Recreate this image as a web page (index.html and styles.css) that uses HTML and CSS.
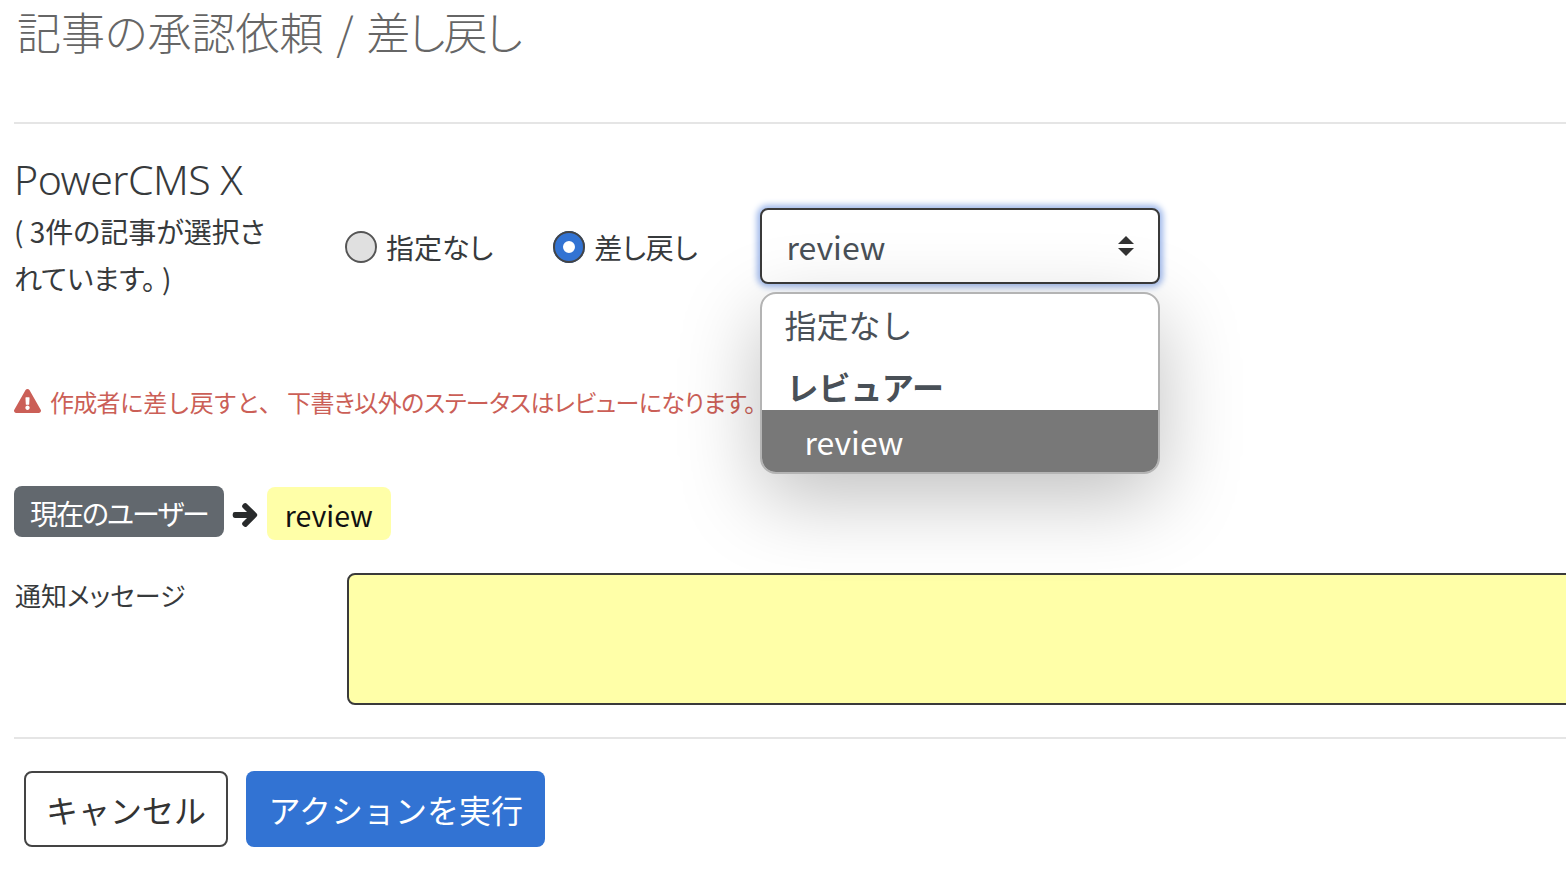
FILE: index.html
```html
<!DOCTYPE html>
<html lang="ja">

<head>
    <meta charset="UTF-8">
    <title>記事の承認依頼 / 差し戻し</title>
    <link rel="stylesheet" href="styles.css">
</head>

<body>
    <div class="modal">
        <h1 class="modal-title">記事の承認依頼 / <span class="title-tail">差し戻し</span></h1>
        <hr class="rule rule-top">

        <div class="form-row status-row">
            <div class="side-col">
                <h2 class="site-name">PowerCMS X</h2>
                <p class="selected-note">( 3件の記事が選択されています。 )</p>
            </div>
            <div class="radios">
                <label class="radio"><span class="radio-mark"></span>指定なし</label>
                <label class="radio"><span class="radio-mark is-checked"></span>差し戻し</label>
                <div class="select-wrap">
                    <div class="select-box">
                        <span>review</span>
                        <svg class="select-arrows" viewBox="0 0 16 20"><path d="M8 0l8 8H0zM8 20l-8-8h16z"/></svg>
                    </div>
                    <div class="select-list">
                        <div class="option">指定なし</div>
                        <div class="optgroup">レビュアー</div>
                        <div class="option is-selected">review</div>
                    </div>
                </div>
            </div>
        </div>

        <p class="warning">
            <svg class="warning-icon" viewBox="0 0 576 512"><path d="M569.517 440.013C587.975 472.007 564.806 512 527.94 512H48.054c-36.937 0-59.999-40.055-41.577-71.987L246.423 23.985c18.467-32.009 64.72-31.951 83.154 0l239.94 416.028zM288 354c-25.405 0-46 20.595-46 46s20.595 46 46 46 46-20.595 46-46-20.595-46-46-46zm-43.673-165.346l7.418 136c.347 6.364 5.609 11.346 11.982 11.346h48.546c6.373 0 11.635-4.982 11.982-11.346l7.418-136c.375-6.874-5.098-12.654-11.982-12.654h-63.383c-6.884 0-12.356 5.78-11.981 12.654z"/></svg>
            <span class="warning-text"><span class="warning-lead">作成者に差し戻すと、</span>下書き以外のステータスはレビューになります。</span>
        </p>

        <div class="flow-row">
            <span class="badge">現在のユーザー</span>
            <svg class="flow-arrow" viewBox="0 0 448 512"><path d="M190.5 66.9l22.2-22.2c9.4-9.4 24.6-9.4 33.9 0L441 239c9.4 9.4 9.4 24.6 0 33.9L246.6 467.3c-9.4 9.4-24.6 9.4-33.9 0l-22.2-22.2c-9.5-9.5-9.3-25 .4-34.3L311.4 296H24c-13.3 0-24-10.7-24-24v-32c0-13.3 10.7-24 24-24h287.4L190.9 101.2c-9.8-9.3-10-24.8-.4-34.3z"/></svg>
            <span class="assignee">review</span>
        </div>

        <div class="form-row message-row">
            <label class="side-col message-label">通知メッセージ</label>
            <div class="message-input"></div>
        </div>

        <hr class="rule rule-bottom">

        <div class="actions">
            <button class="btn btn-cancel">キャンセル</button>
            <button class="btn btn-primary">アクションを実行</button>
        </div>
    </div>
</body>

</html>
```

FILE: styles.css
```css
* {
    box-sizing: border-box;
}

html,
body {
    height: 100%;
    overflow: hidden;
}

body {
    margin: 0;
    font-family: "Noto Sans CJK JP", "Noto Sans", sans-serif;
    font-size: 28px;
    color: #373a3c;
    background: #fff;
}

.modal {
    padding-left: 14px;
    width: 1600px;
}

.modal-title {
    margin: 0;
    padding-left: 3px;
    height: 122px;
    font-size: 44px;
    line-height: 62px;
    font-weight: 300;
    word-spacing: 3px;
    color: #666;
    font-feature-settings: "palt";
}

.title-tail {
    letter-spacing: -2px;
}

.rule {
    margin: 0;
    border: 0;
    border-top: 2px solid #e5e5e5;
}

.form-row {
    display: flex;
}

.status-row {
    margin-top: 27px;
    height: 228px;
}

.side-col {
    flex: 0 0 331px;
}

.site-name {
    margin: 0;
    font-family: "Noto Sans", sans-serif;
    font-size: 41px;
    line-height: 57px;
    font-weight: 300;
    letter-spacing: -0.5px;
}

.selected-note {
    margin: 0;
    width: 270px;
    font-size: 28px;
    line-height: 47px;
    font-feature-settings: "palt";
}

.radios {
    display: flex;
    align-items: flex-start;
    padding-top: 57px;
}

.radio {
    display: flex;
    align-items: center;
    gap: 9px;
    margin-right: 60px;
    height: 78px;
    font-size: 28px;
    font-feature-settings: "palt";
}

.radio-mark {
    width: 32px;
    height: 32px;
    border: 2px solid #555;
    border-radius: 50%;
    background: #e0e0e0;
}

.radio-mark.is-checked {
    border: 10px solid #3273d3;
    outline: 2px solid #444;
    outline-offset: -2px;
    background: #fff;
}

.select-wrap {
    position: relative;
    margin-left: 2px;
    width: 400px;
}

.select-box {
    display: flex;
    justify-content: space-between;
    align-items: center;
    padding: 0 24px 0 25px;
    height: 76px;
    font-size: 32px;
    color: #495057;
    border: 2px solid #3a3a3a;
    border-radius: 8px;
    box-shadow: 0 0 6px 3px #9db7ea;
    background: #fff;
}

.select-arrows {
    width: 16px;
    height: 20px;
    fill: #333;
}

.select-list {
    position: absolute;
    top: 84px;
    left: 0;
    z-index: 2;
    width: 100%;
    height: 182px;
    overflow: hidden;
    font-size: 32px;
    color: #495057;
    border: 2px solid #b4b4b4;
    border-radius: 16px;
    background: #fff;
    box-shadow: 0 24px 80px rgba(0, 0, 0, 0.25);
}

.option {
    padding: 0 23px;
    height: 62px;
    line-height: 60px;
}

.optgroup {
    padding: 0 25px;
    height: 54px;
    line-height: 60px;
    font-weight: 700;
}

.option.is-selected {
    padding-left: 43px;
    line-height: 62px;
    color: #fff;
    background: #787878;
}

.warning {
    display: flex;
    align-items: center;
    gap: 9px;
    margin: 0;
    height: 44px;
    font-size: 24px;
    color: #cb5f57;
    white-space: nowrap;
}

.warning-text {
    letter-spacing: -0.57px;
    font-feature-settings: "palt";
}

.warning-lead {
    display: inline-block;
    width: 237px;
    letter-spacing: -0.7px;
    font-feature-settings: "palt" 0;
}

.warning-icon {
    width: 27px;
    height: 24px;
    fill: currentColor;
}

.flow-row {
    display: flex;
    align-items: center;
    gap: 8px;
    margin-top: 61px;
    height: 54px;
}

.badge {
    padding: 0 16px;
    height: 51px;
    line-height: 55px;
    font-size: 28px;
    letter-spacing: -2px;
    color: #fff;
    background: #62686e;
    border-radius: 8px;
    font-feature-settings: "palt";
}

.flow-arrow {
    margin-top: 7px;
    width: 26px;
    height: 26px;
    fill: #292b2c;
    stroke: #292b2c;
    stroke-width: 36;
    overflow: visible;
}

.assignee {
    margin-top: 5px;
    margin-left: 1px;
    padding: 0 18px;
    height: 53px;
    line-height: 56px;
    font-size: 28.5px;
    color: #111;
    background: #ffffa8;
    border-radius: 8px;
}

.message-row {
    margin-top: 35px;
}

.message-label {
    flex-basis: 333px;
    padding-left: 1px;
    font-size: 26px;
    line-height: 44px;
    font-feature-settings: "palt";
}

.message-input {
    flex: 1;
    height: 132px;
    background: #ffffa8;
    border: 2px solid #3a3a3a;
    border-radius: 8px;
}

.rule-bottom {
    margin-top: 32px;
}

.actions {
    display: flex;
    gap: 18px;
    margin-top: 32px;
    padding-left: 10px;
}

.btn {
    height: 76px;
    padding: 0 22.5px;
    font-family: inherit;
    font-size: 32px;
    border-radius: 8px;
}

.btn-cancel {
    padding: 0 20px;
    color: #333;
    background: #fff;
    border: 2px solid #444;
}

.btn-primary {
    color: #fff;
    background: #3273d3;
    border: 0;
}
```
